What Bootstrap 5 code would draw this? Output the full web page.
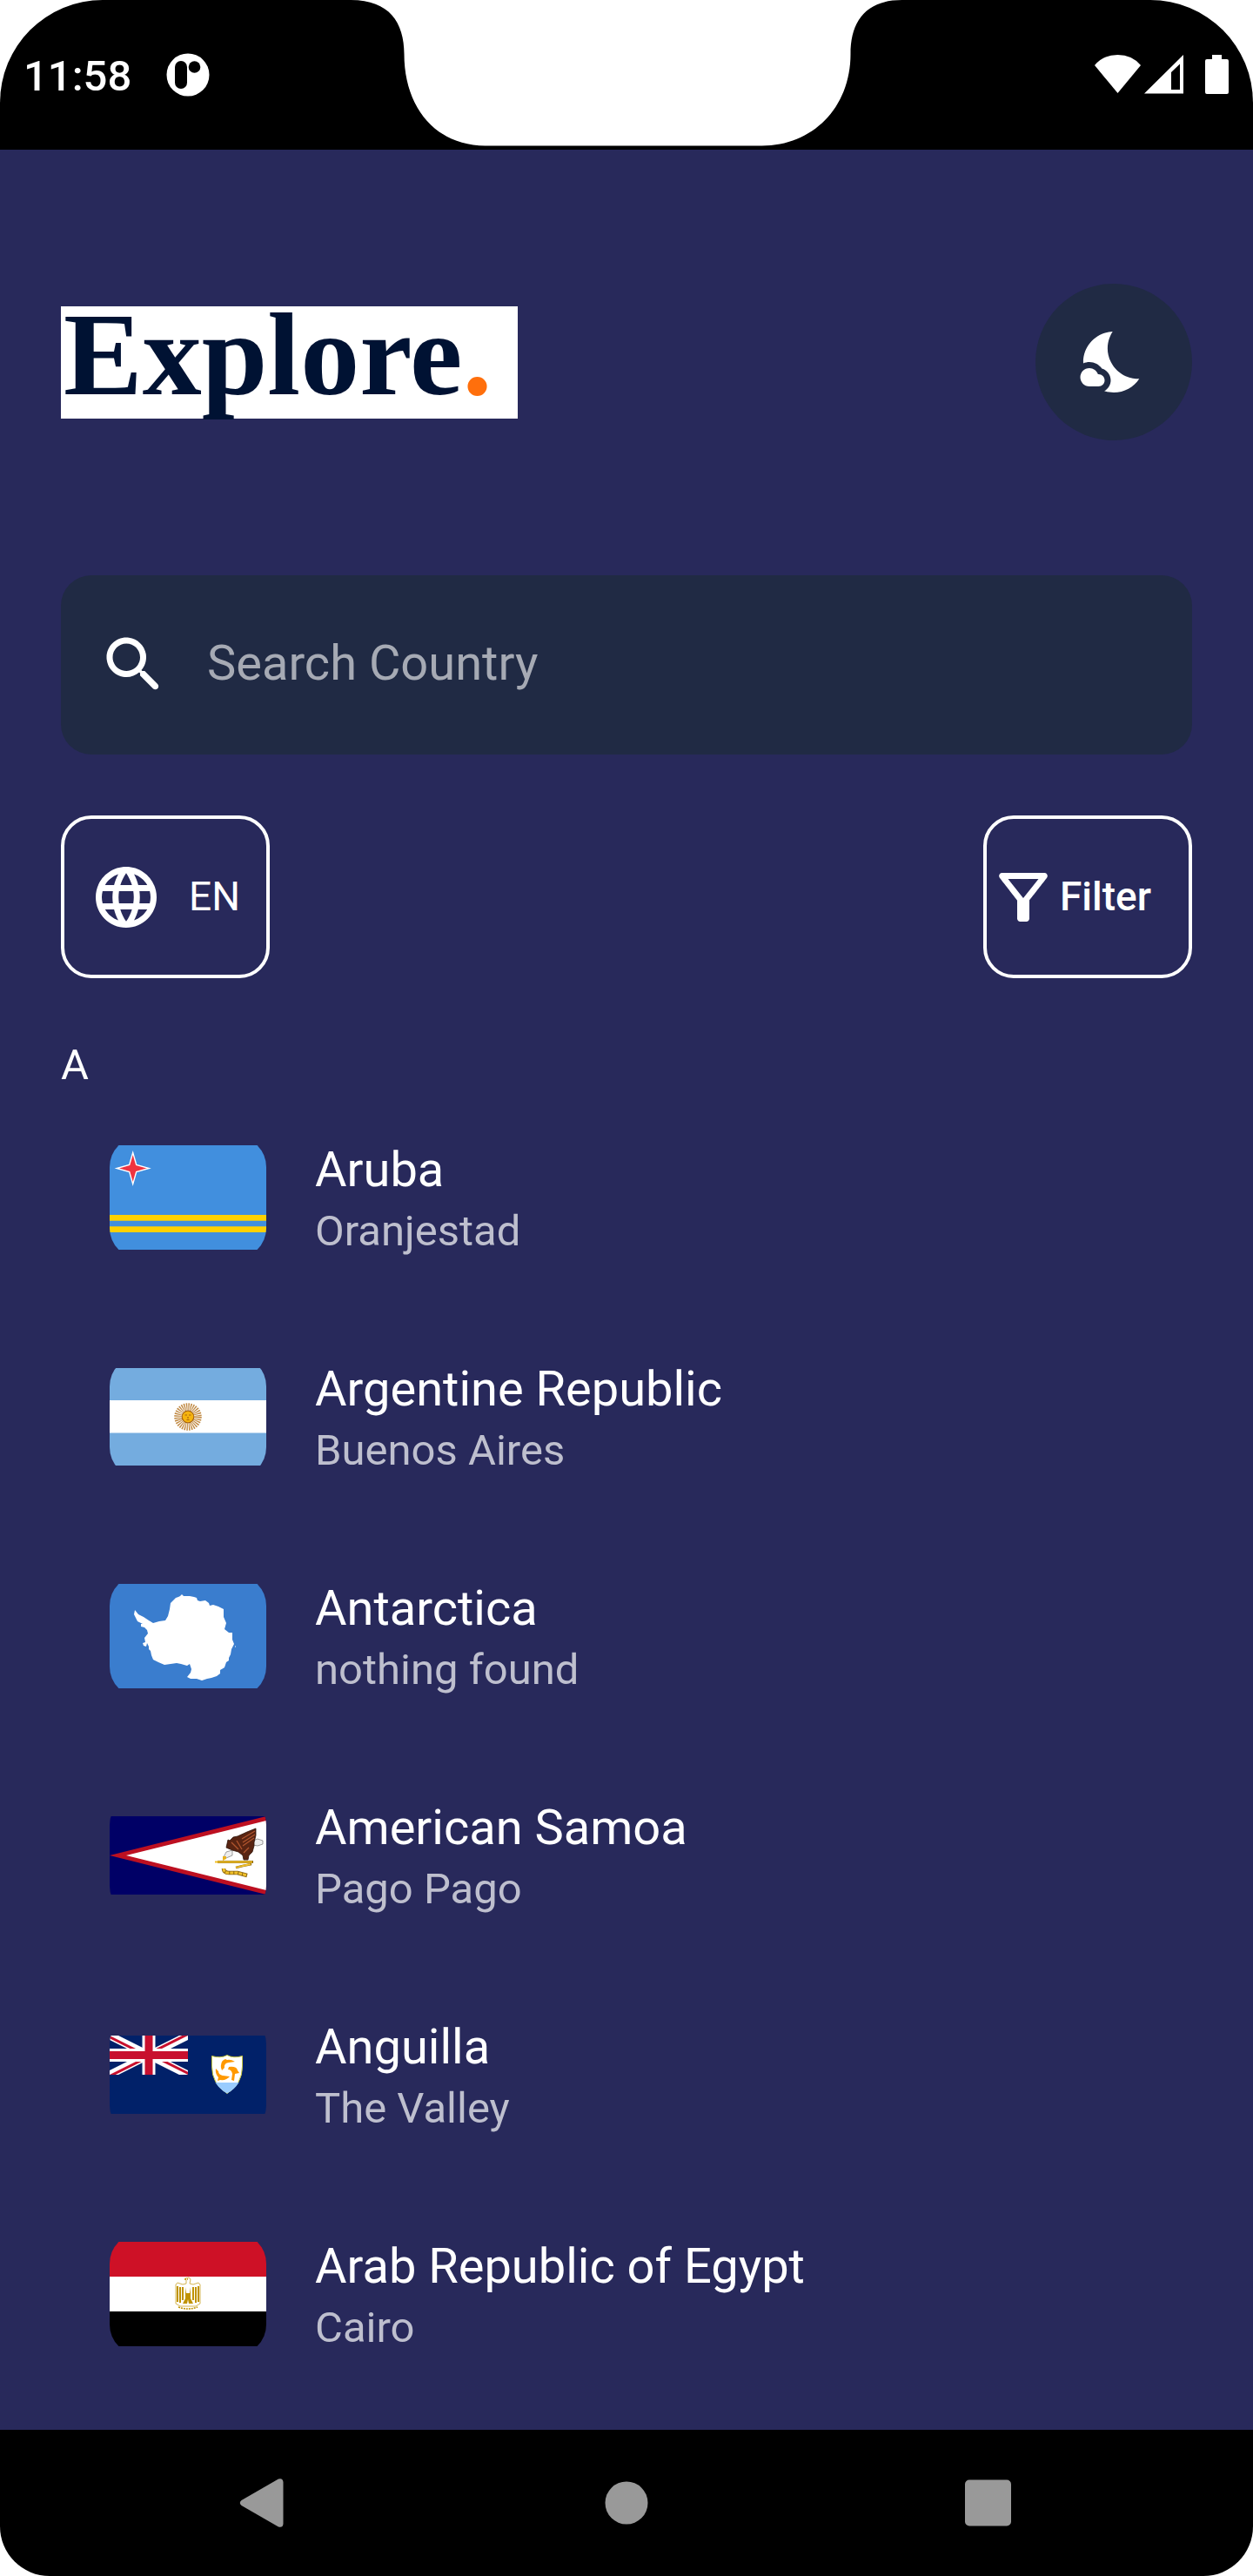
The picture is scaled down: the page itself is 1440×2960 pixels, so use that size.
<!DOCTYPE html>
<html lang="en" data-bs-theme="dark">
<head>
<meta charset="utf-8">
<meta name="viewport" content="width=device-width, initial-scale=1">
<title>Explore</title>
<link href="https://cdn.jsdelivr.net/npm/bootstrap@5.3.0/dist/css/bootstrap.min.css" rel="stylesheet">
<script src="https://cdn.jsdelivr.net/npm/bootstrap@5.3.0/dist/js/bootstrap.bundle.min.js" defer></script>
<style>
  body { background: #fff; color: #fff; font-family: Roboto, "Noto Sans", sans-serif; }
  svg { display: block; flex: none; }
  .ico { width: 84px; height: 84px; fill: currentColor; }

  .status-wrap { background: linear-gradient(#fff 150px, #000 150px); }
  .status-bar { height: 172px; background: #000; border-radius: 118px 118px 0 0; padding: 0 28px 0 27px; }
  .notch { position: absolute; top: 0; left: 50%; transform: translateX(-50%); }
  .clock { padding-top: 3px; font-size: 49px; line-height: 60px; font-weight: 500; }

  .screen { background: #28295b; padding: 154px 70px 30px; }
  .brand { width: 525px; height: 129px; line-height: 110px; padding-left: 3px;
    background: #fff; color: #001233; font-family: "Liberation Serif", serif; font-size: 136px; font-weight: 700; }
  .brand span { color: #ff6f0c; }
  .theme-toggle { width: 180px; height: 180px; background: #202a44; color: #fff; }

  .search-box { height: 206px; margin-top: 155px; padding: 0 42px; gap: 42px; background: #202a44; border-radius: 35px; }
  .search-box .form-control { padding: 0 0 4px; font-size: 56px; line-height: 70px; color: #fff; }
  .search-box .form-control::placeholder { color: #a6aab4; opacity: 1; }

  .tools { margin-top: 70px; }
  .pill { width: 240px; height: 187px; padding: 0; border: 4px solid #fff; border-radius: 35px;
    color: #fff; font-size: 46px; line-height: 56px; }
  .pill span { padding-bottom: 2px; }
  .lang { padding-left: 29px; gap: 30px; }
  .filter-btn { font-weight: 500; }
  .initial { margin: 73px 0 0; font-size: 49px; line-height: 53px; font-weight: 400; }

  .country { padding: 56px 56px 51px; gap: 56px; }
  .flag { width: 180px; height: 140px; border-radius: 35px; overflow: hidden; flex: none; }
  .place { padding-top: 3px; }
  .place-name { font-size: 56px; line-height: 70px; font-weight: 400; }
  .capital { font-size: 49px; line-height: 72px; color: #bebfce; }

  .nav-keys { height: 168px; padding: 0 19%; background: #000; border-radius: 0 0 57px 57px; }
  .nav-keys svg { fill: #999; }
</style>
</head>
<body>
<div class="d-flex flex-column min-vh-100">

  <div class="status-wrap">
    <div class="status-bar position-relative d-flex align-items-center justify-content-between">
      <svg class="notch" width="633" height="168" viewBox="0 0 633 168" fill="#fff"><path d="M0 0C44 0 61 26 61 62C61 124 98 167.500 154 167.500H472C530 167.500 574 124 574 62C574 26 590 0 633 0Z"/></svg>
      <div class="d-flex align-items-center">
        <span class="clock me-4">11:58</span>
        <svg class="ms-3" width="50" height="50" viewBox="0 0 50 50"><circle cx="25" cy="25" r="24.500" fill="#fff"/><rect x="10" y="9" width="14" height="32" rx="7"/><circle cx="32.500" cy="16" r="6.800"/></svg>
      </div>
      <svg width="154" height="48" viewBox="0 0 154 48" fill="#fff">
        <path d="M0 13Q10 1 26.500 1T53 13L26.500 45Z"/>
        <path fill-rule="evenodd" d="M57 45.500L102 1V45.500ZM88 21V41H98V11.500Z"/>
        <path d="M135 1h11v5h6q2 0 2 2v36q0 2-2 2h-23q-2 0-2-2V8q0-2 2-2h6z"/>
      </svg>
    </div>
  </div>

  <main class="screen flex-grow-1">
    <header class="d-flex align-items-center justify-content-between">
      <div class="brand">Explore<span>.</span></div>
      <button type="button" class="btn theme-toggle rounded-circle border-0 d-flex align-items-center justify-content-center p-0" aria-label="Toggle theme">
        <svg class="ico" viewBox="0 0 24 24"><path d="M11.100 12.080C8.770 7.570 10.600 3.600 11.630 2.010C6.270 2.200 1.980 6.590 1.980 12c0 .14.02.28.02.42C2.620 12.150 3.290 12 4 12c1.660 0 3.180.83 4.100 2.150C9.770 14.630 11 16.170 11 18c0 1.520-.87 2.830-2.120 3.510.98.32 2.030.5 3.110.5 3.500 0 6.580-1.800 8.370-4.520C18 17.720 13.380 16.520 11.100 12.080z"/><path d="M7 16h-.18C6.400 14.840 5.300 14 4 14c-1.660 0-3 1.340-3 3s1.340 3 3 3h3c1.100 0 2-.9 2-2s-.9-2-2-2z"/></svg>
      </button>
    </header>

    <label class="search-box d-flex align-items-center">
      <svg class="ico" viewBox="0 0 24 24"><path d="M15.500 14h-.79l-.28-.27c1.200-1.400 1.820-3.310 1.480-5.340-.47-2.780-2.790-5-5.590-5.340-4.230-.52-7.790 3.040-7.270 7.270.34 2.800 2.560 5.120 5.340 5.590 2.030.34 3.940-.28 5.340-1.480l.27.28v.79l4.250 4.250c.41.41 1.080.41 1.490 0 .41-.41.41-1.080 0-1.490L15.500 14zm-6 0C7.010 14 5 11.990 5 9.500S7.010 5 9.500 5 14 7.010 14 9.500 11.990 14 9.500 14z"/></svg>
      <input type="text" class="form-control bg-transparent border-0 shadow-none" placeholder="Search Country" aria-label="Search Country">
    </label>

    <div class="tools d-flex justify-content-between">
      <button type="button" class="btn pill lang d-flex align-items-center">
        <svg class="ico" viewBox="0 0 24 24"><path d="M11.990 2C6.470 2 2 6.480 2 12s4.470 10 9.990 10C17.520 22 22 17.520 22 12S17.520 2 11.990 2zm6.930 6h-2.950c-.32-1.250-.78-2.450-1.380-3.560 1.840.63 3.370 1.910 4.330 3.560zM12 4.040c.83 1.200 1.480 2.530 1.910 3.960h-3.820c.43-1.430 1.080-2.760 1.910-3.960zM4.260 14C4.100 13.360 4 12.690 4 12s.1-1.360.26-2h3.380c-.08.66-.14 1.320-.14 2s.06 1.340.14 2H4.260zm.82 2h2.950c.32 1.250.78 2.450 1.380 3.560-1.840-.63-3.370-1.900-4.330-3.560zm2.950-8H5.080c.96-1.660 2.490-2.930 4.330-3.560C8.810 5.550 8.350 6.750 8.030 8zM12 19.960c-.83-1.200-1.480-2.530-1.910-3.960h3.820c-.43 1.430-1.080 2.760-1.910 3.960zM14.340 14H9.660c-.09-.66-.16-1.320-.16-2s.07-1.350.16-2h4.680c.09.65.16 1.320.16 2s-.07 1.340-.16 2zm.25 5.560c.6-1.110 1.060-2.310 1.380-3.560h2.950c-.96 1.650-2.490 2.930-4.330 3.560zM16.360 14c.08-.66.14-1.320.14-2s-.06-1.340-.14-2h3.380c.16.64.26 1.310.26 2s-.1 1.360-.26 2h-3.380z"/></svg>
        <span>EN</span>
      </button>
      <button type="button" class="btn pill filter-btn d-flex align-items-center">
        <svg class="ico" viewBox="0 0 24 24"><path fill-rule="evenodd" d="M7 6h10l-5.010 6.300L7 6zM4.250 5.610C6.270 8.200 10 13 10 13v6c0 .55.45 1 1 1h2c.55 0 1-.45 1-1v-6s3.720-4.800 5.740-7.390C20.250 4.950 19.780 4 18.950 4H5.040C4.210 4 3.740 4.950 4.250 5.610z"/></svg>
        <span>Filter</span>
      </button>
    </div>

    <h2 class="initial">A</h2>

    <ul class="list-unstyled mb-0">
      <li class="country d-flex">
        <div class="flag d-flex align-items-center">
          <svg width="180" height="120" viewBox="0 0 180 120"><path fill="#418fde" d="M0 0h180v120H0z"/><path fill="#ffd100" d="M0 80h180v6.670H0zM0 93.300h180v6.670H0z"/><path fill="#ef3340" stroke="#fff" stroke-width="1.400" d="M26.700 8.500l4 14 14.500 4-14.500 4-4 14-4-14-14.500-4 14.500-4z"/></svg>
        </div>
        <div class="place"><div class="place-name">Aruba</div><div class="capital">Oranjestad</div></div>
      </li>
      <li class="country d-flex">
        <div class="flag d-flex align-items-center">
          <svg width="180" height="112" viewBox="0 0 180 112"><path fill="#74acdf" d="M0 0h180v112H0z"/><path fill="#fff" d="M0 37h180v37.500H0z"/><circle cx="90" cy="56" r="11.500" fill="none" stroke="#c08a45" stroke-width="8.500" stroke-dasharray="1.250 1.008"/><circle cx="90" cy="56" r="6.800" fill="#f6b40e" stroke="#a8640c" stroke-width="1.200"/><path d="M86.500 54h2.500M91 54h2.500M90 56v2M88.500 59.500h3" stroke="#a8640c" stroke-width="1.200"/></svg>
        </div>
        <div class="place"><div class="place-name">Argentine Republic</div><div class="capital">Buenos Aires</div></div>
      </li>
      <li class="country d-flex">
        <div class="flag d-flex align-items-center">
          <svg width="180" height="120" viewBox="0 0 180 120"><path fill="#3a7dce" d="M0 0h180v120H0z"/><path fill="#fff" d="M29 30L33 35L39 38L45 42L50 45L57 43L64 42L67 37L69 29L70 22L76 16L79 15L81 14L83 12L85 14L92 14L97 15L100 16L101 19L104 20L110 19L114 22L115 25L119 24L125 26L131 29L131 38L134 45L132 52L137 56L141 56L141 64L143 69L140 75L139 81L137 85L137 88L134 90L132 96L127 99L127 103L123 106L117 108L112 109L106 111L100 109L93 109L89 107L93 102L94 98L93 95L92 92L89 94L82 92L77 91L70 92L63 93L56 90L50 87L48 82L47 77L45 75L45 72L43 68L42 72L39 71L38 68L41 67L40 62L44 57L43 53L40 50L36 49L36 46L38 46L32 43L30 39L28 35ZM144 71l1 1-1 1z"/></svg>
        </div>
        <div class="place"><div class="place-name">Antarctica</div><div class="capital">nothing found</div></div>
      </li>
      <li class="country d-flex">
        <div class="flag d-flex align-items-center">
          <svg width="180" height="90" viewBox="0 0 180 90"><path fill="#006" d="M0 0h180v90H0z"/><path fill="#bd1021" d="M0 45L180 0v90z"/><path fill="#fff" d="M19 45L180 5v80z"/>
            <path fill="#eee" stroke="#777" stroke-width=".7" d="M165 28l5-2 6 2v4l-6 2-5-1zM141 39l-7 2-3 6 3 1 7-3z"/>
            <path fill="#582412" stroke="#2b1108" stroke-width=".8" d="M168 14L158 18L147 23L142 24L138 28L136 27L134 36L141 39L148 41L153 45L154 50L159 50L160 45L164 41L166 34L166 30L168 22Z"/>
            <path fill="none" stroke="#b0552e" stroke-width="1.300" d="M167 17l-15 9M167 21l-14 9M166 25l-13 9M140 30l8 8M146 28l6 10M160 36l-6 6"/>
            <path fill="#e8b21e" d="M130 46l4 0 0 3-4 2z"/>
            <path fill="none" stroke="#8a6410" stroke-width="2.800" d="M124 52.500H165M145 59l8-2 10-2"/>
            <path fill="none" stroke="#8a6410" stroke-width="4.500" d="M131 60q0 5 6 5h10l11 3"/>
            <path fill="none" stroke="#f0c02a" stroke-width="1.800" d="M121 52.500H164M145 59l8-2 9-2"/>
            <path fill="none" stroke="#f0c02a" stroke-width="3" stroke-dasharray="4 1" d="M131 60q0 5 6 5h10l11 3"/></svg>
        </div>
        <div class="place"><div class="place-name">American Samoa</div><div class="capital">Pago Pago</div></div>
      </li>
      <li class="country d-flex">
        <div class="flag d-flex align-items-center">
          <svg width="180" height="90" viewBox="0 0 180 90"><defs><clipPath id="jack"><path d="M0 0h90v45H0z"/></clipPath><clipPath id="quarters"><path d="M45 22.500H90V45zM45 22.500V45H0zM45 22.500H0V0zM45 22.500V0H90z"/></clipPath></defs>
            <path fill="#012169" d="M0 0h180v90H0z"/>
            <g clip-path="url(#jack)" fill="none"><path stroke="#fff" stroke-width="9" d="M0 0L90 45M90 0L0 45"/><path clip-path="url(#quarters)" stroke="#c8102e" stroke-width="6" d="M0 0L90 45M90 0L0 45"/><path stroke="#fff" stroke-width="15" d="M45 0V45M0 22.500H90"/><path stroke="#c8102e" stroke-width="9" d="M45 0V45M0 22.500H90"/></g>
            <path fill="#fff" stroke="#c8c83c" stroke-width="1" d="M117.500 23.500q10 3 17.500-1 7 4 17.500 1v12q0 20-17.500 31-17.500-11-17.500-31z"/>
            <path fill="#9cf" d="M121.500 54h27q-5 8-13.500 12.500-8.500-4.500-13.500-12.500z"/>
            <path fill="#f90" d="M128 37q-1-8 5-10l2 1q4-1 9 2l-7 1q-6 1-5 6l-3 3zM137 36q9-1 10 4l2 3-5 1-1 8-3-1 1-7q-1-5-5-5zM122 38l3 3q0 4 5 5l8 1q-4 5-11 4l-3 1 1-4q-4-4-3-10z"/></svg>
        </div>
        <div class="place"><div class="place-name">Anguilla</div><div class="capital">The Valley</div></div>
      </li>
      <li class="country d-flex">
        <div class="flag d-flex align-items-center">
          <svg width="180" height="120" viewBox="0 0 180 120"><path fill="#ce1126" d="M0 0h180v40H0z"/><path fill="#fff" d="M0 40h180v40H0z"/><path d="M0 80h180v40H0z"/>
            <path fill="#fff" stroke="#c9a227" stroke-width=".8" d="M87 42l4-1 2 2-1 5 4 1 6-2 2 2v22l-5 3H81l-5-3V49l2-2 6 2 4-1v-4z"/>
            <path fill="none" stroke="#c09300" stroke-width="2" d="M78 51v18M81 52v18M84 52v15M102 51v18M99 52v18M96 52v15"/>
            <path fill="#c09300" d="M87 52v13l-3 6h5l1-5 1 5h5l-3-6V52l-1 7h-4z"/>
            <path fill="none" stroke="#c09300" stroke-width="1.600" stroke-dasharray="2 1" d="M79 75q11 4 22 0M86 43h4"/></svg>
        </div>
        <div class="place"><div class="place-name">Arab Republic of Egypt</div><div class="capital">Cairo</div></div>
      </li>
    </ul>
  </main>

  <nav class="nav-keys d-flex align-items-center justify-content-between" aria-label="System">
    <button type="button" class="btn p-0 border-0" aria-label="Back"><svg width="60" height="60" viewBox="0 0 60 60"><path d="M3.500 27L46 2.500Q51 1 51.500 6V54Q51 59 46 57.500L3.500 33Q0 30 3.500 27Z"/></svg></button>
    <button type="button" class="btn p-0 border-0" aria-label="Home"><svg width="60" height="60" viewBox="0 0 60 60"><circle cx="30" cy="30" r="24.500"/></svg></button>
    <button type="button" class="btn p-0 border-0" aria-label="Recents"><svg width="60" height="60" viewBox="0 0 60 60"><rect x="3" y="3.500" width="53" height="53" rx="5"/></svg></button>
  </nav>
</div>
</body>
</html>
